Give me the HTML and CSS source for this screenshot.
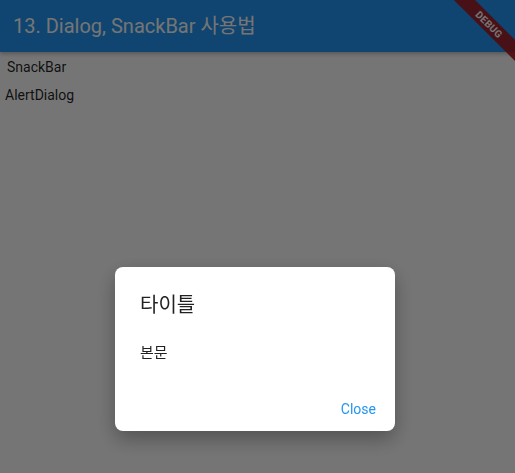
FILE: index.html
```html
<!DOCTYPE html>
<html lang="ko">
<head>
<meta charset="utf-8">
<title>13. Dialog, SnackBar 사용법</title>
<link rel="stylesheet" href="styles.css">
</head>
<body>
<div class="app">
  <header class="appbar">
    <h1 class="appbar-title">13. Dialog, SnackBar 사용법</h1>
  </header>
  <main class="content">
    <button class="text-btn text-btn-snack">SnackBar</button>
    <button class="text-btn text-btn-alert">AlertDialog</button>
  </main>
  <div class="debug-banner"><span>DEBUG</span></div>
</div>
<div class="barrier">
  <div class="dialog" role="dialog">
    <h2 class="dialog-title">타이틀</h2>
    <p class="dialog-body">본문</p>
    <div class="dialog-actions">
      <button class="dialog-btn">Close</button>
    </div>
  </div>
</div>
</body>
</html>
```
FILE: styles.css
```css
html, body {
  margin: 0;
  padding: 0;
  width: 100%;
  height: 100%;
  overflow: hidden;
  background: #ffffff;
  font-family: Roboto, "Noto Sans CJK KR", sans-serif;
}

.app {
  position: relative;
  height: 100%;
}

.appbar {
  height: 52px;
  background: #2196F3;
  display: flex;
  align-items: center;
  padding-left: 13px;
  box-shadow: 0 2px 4px rgba(0, 0, 0, 0.25);
}

.appbar-title {
  margin: 0;
  font-size: 20px;
  font-weight: 400;
  color: #ffffff;
  line-height: 24px;
}

.content {
  display: flex;
  flex-direction: column;
  align-items: flex-start;
  padding-top: 1px;
}

.text-btn {
  border: 0;
  background: none;
  height: 28px;
  font-family: Roboto, "Noto Sans CJK KR", sans-serif;
  font-size: 14px;
  color: rgba(0, 0, 0, 0.87);
  padding: 0;
}

.text-btn-snack { padding-left: 7px; }
.text-btn-alert { padding-left: 5px; }

.debug-banner {
  position: absolute;
  left: 429px;
  top: 17px;
  width: 120px;
  height: 15px;
  background: rgba(170, 26, 30, 0.9);
  transform: rotate(45deg);
  display: flex;
  align-items: center;
  justify-content: center;
}

.debug-banner span {
  font-size: 10px;
  font-weight: 700;
  color: #ffffff;
  letter-spacing: 0.3px;
}

.barrier {
  position: fixed;
  inset: 0;
  background: rgba(0, 0, 0, 0.54);
  display: flex;
  justify-content: center;
  align-items: flex-start;
  padding-top: 267px;
  padding-left: 0;
  padding-right: 5px;
  box-sizing: border-box;
}

.dialog {
  width: 280px;
  height: 164px;
  background: #ffffff;
  border-radius: 8px;
  box-sizing: border-box;
  display: flex;
  flex-direction: column;
  box-shadow: 0 8px 20px rgba(0, 0, 0, 0.3);
}

.dialog-title {
  margin: 0;
  padding: 24px 24px 0 25px;
  font-size: 20px;
  font-weight: 400;
  line-height: 28px;
  color: rgba(0, 0, 0, 0.87);
}

.dialog-body {
  margin: 24px 0 0;
  padding: 0 24px 0 25px;
  font-size: 15px;
  line-height: 20px;
  color: rgba(0, 0, 0, 0.87);
}

.dialog-actions {
  margin-top: auto;
  display: flex;
  justify-content: flex-end;
  padding: 0 19px 8px 0;
}

.dialog-btn {
  border: 0;
  background: none;
  padding: 0;
  height: 28px;
  font-family: Roboto, sans-serif;
  font-size: 14px;
  font-weight: 400;
  color: #2196F3;
}
```
